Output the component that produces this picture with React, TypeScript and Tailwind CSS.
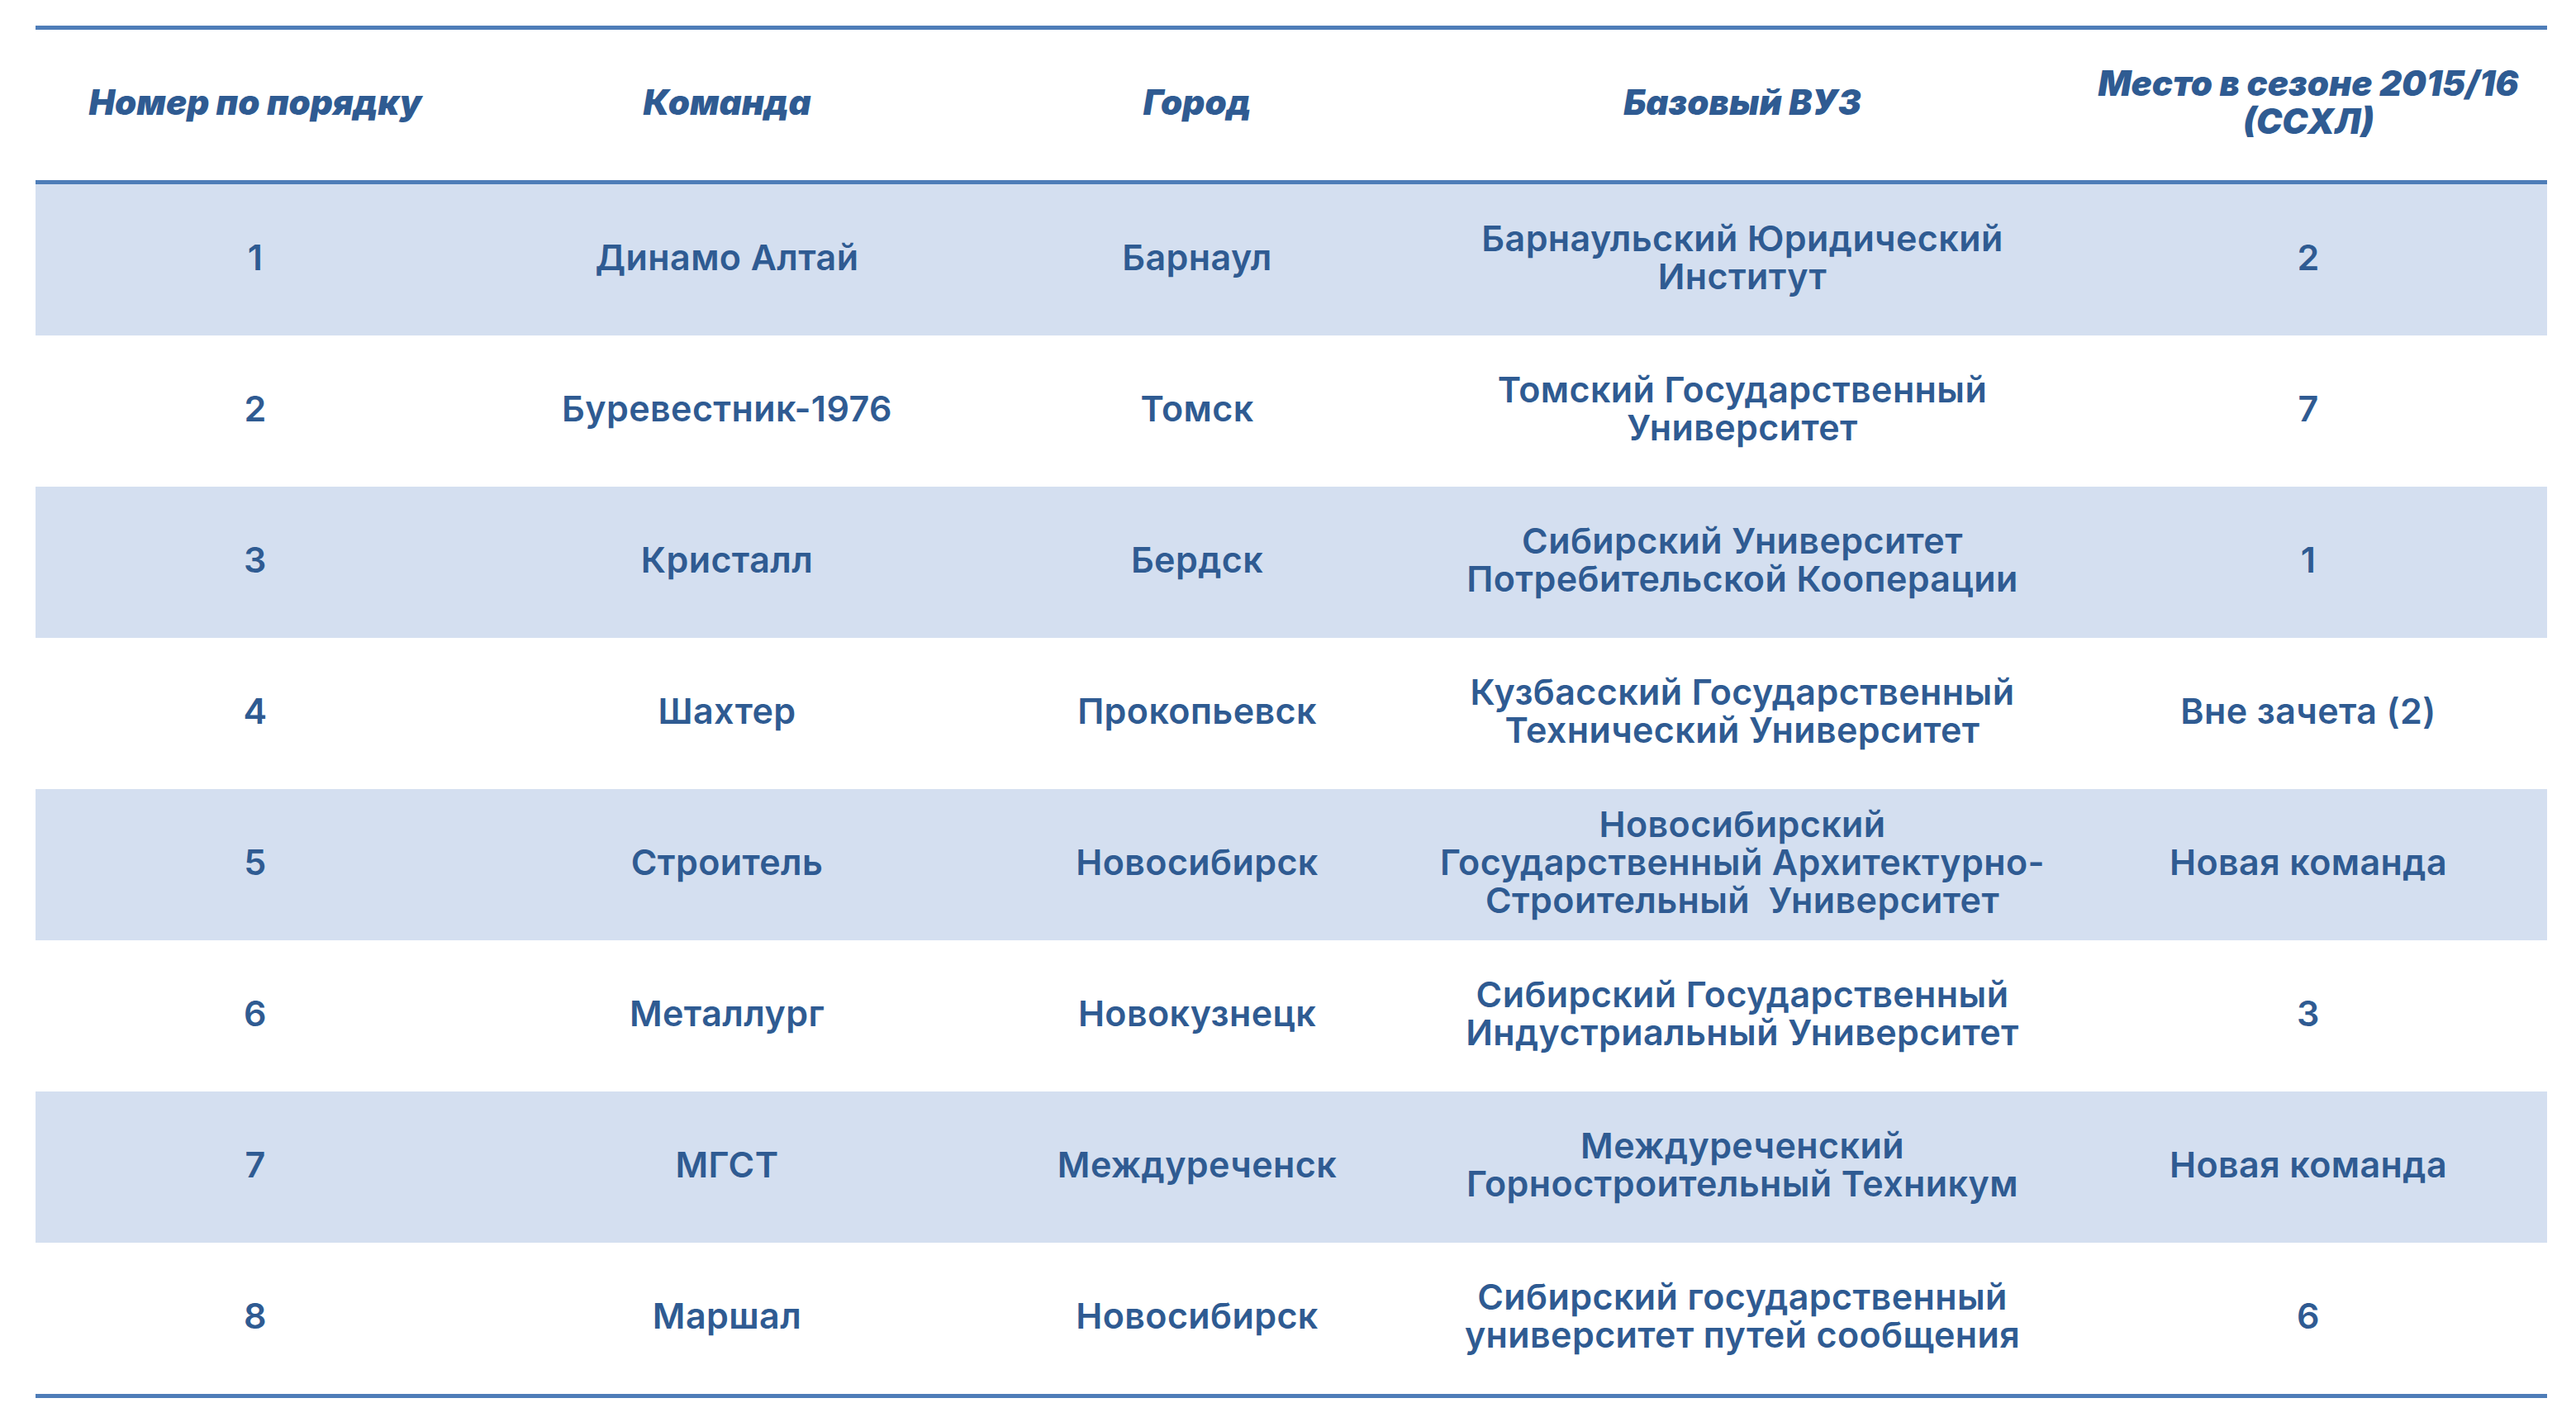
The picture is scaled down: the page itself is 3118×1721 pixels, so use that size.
import React from "react";

type Row = { n: string; team: string; city: string; uni: string[]; place: string };

const rows: Row[] = [
  { n: "1", team: "Динамо Алтай", city: "Барнаул", uni: ["Барнаульский Юридический", "Институт"], place: "2" },
  { n: "2", team: "Буревестник-1976", city: "Томск", uni: ["Томский Государственный", "Университет"], place: "7" },
  { n: "3", team: "Кристалл", city: "Бердск", uni: ["Сибирский Университет", "Потребительской Кооперации"], place: "1" },
  { n: "4", team: "Шахтер", city: "Прокопьевск", uni: ["Кузбасский Государственный", "Технический Университет"], place: "Вне зачета (2)" },
  { n: "5", team: "Строитель", city: "Новосибирск", uni: ["Новосибирский", "Государственный Архитектурно-", "Строительный\u00a0 Университет"], place: "Новая команда" },
  { n: "6", team: "Металлург", city: "Новокузнецк", uni: ["Сибирский Государственный", "Индустриальный Университет"], place: "3" },
  { n: "7", team: "МГСТ", city: "Междуреченск", uni: ["Междуреченский", "Горностроительный Техникум"], place: "Новая команда" },
  { n: "8", team: "Маршал", city: "Новосибирск", uni: ["Сибирский государственный", "университет путей сообщения"], place: "6" },
];

const cell = "flex items-center justify-center text-center";

export default function App() {
  return (
    <div className="w-[3118px] h-[1721px] bg-white pt-[31px] pl-[43px] text-[#2f5b92] [font-family:Inter,'Noto_Sans',sans-serif]">
      <div className="w-[3040px]">
        <div className="h-[5px] bg-[#4e7db8]" />
        <div className="grid grid-cols-[532px_610px_528px_792px_578px] h-[182px] pb-[6px] text-[42px] leading-[46px] font-black italic">
          <div className={cell}>Номер по порядку</div>
          <div className={cell}>Команда</div>
          <div className={cell}>Город</div>
          <div className={cell}>Базовый ВУЗ</div>
          <div className={cell}>
            <span>
              Место в сезоне 2015/16
              <br />
              (ССХЛ)
            </span>
          </div>
        </div>
        <div className="h-[5px] bg-[#4e7db8]" />
        {rows.map((r, i) => (
          <div
            key={r.n}
            className={
              "grid grid-cols-[532px_610px_528px_792px_578px] h-[183px] text-[43px] leading-[46px] font-semibold tracking-[0.4px] pb-[8px] " +
              (i % 2 === 0 ? "bg-[#d4dff0]" : "bg-white")
            }
          >
            <div className={cell}>{r.n}</div>
            <div className={cell}>{r.team}</div>
            <div className={cell}>{r.city}</div>
            <div className={cell}>
              <span>
                {r.uni.map((l, k) => (
                  <React.Fragment key={k}>
                    {k > 0 && <br />}
                    {l}
                  </React.Fragment>
                ))}
              </span>
            </div>
            <div className={cell}>{r.place}</div>
          </div>
        ))}
        <div className="h-[5px] bg-[#4e7db8]" />
      </div>
    </div>
  );
}
